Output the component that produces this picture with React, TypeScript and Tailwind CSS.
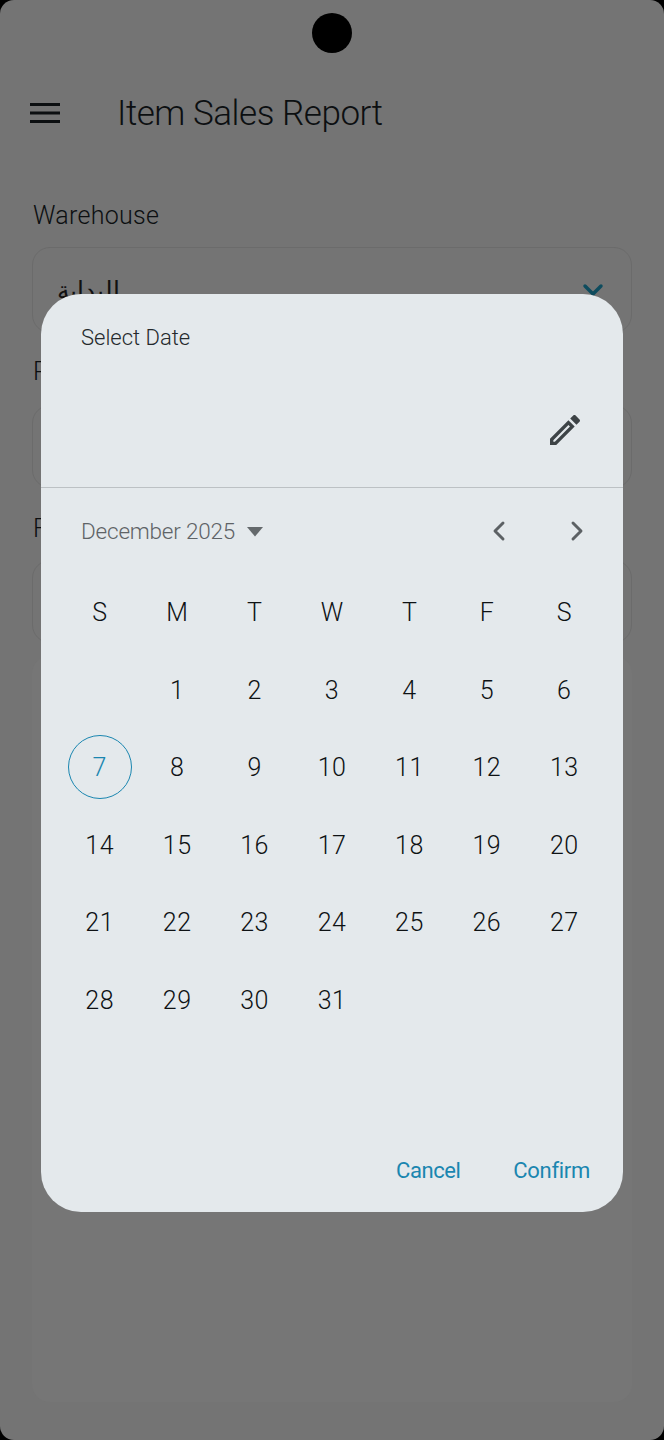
import React from "react"
import { ChevronDown, ChevronLeft, ChevronRight } from "lucide-react"

const font = "font-['Roboto','Noto_Sans',sans-serif]"

const weekDays = ["S", "M", "T", "W", "T", "F", "S"]
const days = [null, ...Array.from({ length: 31 }, (_, i) => i + 1)]

function Field({ label, value, height, top, gap }: { label: string; value?: string; height: string; top: string; gap: string }) {
  return (
    <div className={`flex flex-col ${top}`}>
      <span className="pl-[1px] text-[25px] leading-[32px] text-[#0c0f11] tracking-[0.3px] font-light">{label}</span>
      <div className={`${gap} ${height} rounded-[18px] border border-[#6b6b6b] flex items-center justify-between pl-[24px] pr-[22px]`}>
        {value && <span className="text-[25px] text-[#111] font-['Noto_Sans',sans-serif]">{value}</span>}
        {value && <ChevronDown className="w-[32px] h-[32px] text-[#0e4c5e]" strokeWidth={2.6} />}
      </div>
    </div>
  )
}

export default function App() {
  return (
    <div className={`relative w-[664px] h-[1440px] overflow-hidden bg-black ${font}`}>
      <div className="relative h-full rounded-[14px] bg-[#747474] overflow-hidden">
        <div className="absolute left-[312px] top-[13px] w-[40px] h-[40px] rounded-full bg-black" />

        <header className="flex items-center pt-[88px] pl-[30px] h-[138px]">
          <svg width="30" height="20" viewBox="0 0 30 20" className="text-[#0c0f11]" fill="currentColor">
            <rect x="0" y="0" width="30" height="3" />
            <rect x="0" y="8.5" width="30" height="3" />
            <rect x="0" y="17" width="30" height="3" />
          </svg>
          <h1 className="ml-[57px] mt-[2px] text-[35px] leading-[44px] font-light text-[#0c0f11] tracking-[-0.45px]">Item Sales Report</h1>
        </header>

        <main className="px-[32px] pt-[62px] flex flex-col">
          <Field label="Warehouse" value="البداية" height="h-[86px]" top="" gap="mt-[15px]" />
          <Field label="P" height="h-[83px]" top="mt-[23px]" gap="mt-[17px]" />
          <Field label="F" height="h-[83px]" top="mt-[25px]" gap="mt-[15px]" />
          <div className="h-[746px] mt-[13px] rounded-[18px] bg-[#767676]" />
        </main>

        <div className="absolute left-[41px] top-[294px] w-[582px] h-[918px] rounded-[40px] bg-[#e4e9ec] flex flex-col">
          <div className="h-[194px] border-b border-[#bcc1c4] pl-[40px] pr-[38px] pt-[29px] flex flex-col">
            <span className="text-[22px] leading-[30px] font-light text-[#24292c]">Select Date</span>
            <svg className="self-end mt-[57px] w-[40px] h-[40px]" viewBox="0 0 24 24" fill="#3d4346">
              <path d="M3 17.25V21h3.75L17.81 9.94l-3.75-3.75L3 17.25zM5.92 19H5v-.92l9.06-9.06.92.92L5.92 19zM20.71 5.63l-2.34-2.34c-.2-.2-.45-.29-.71-.29s-.51.1-.7.29l-1.83 1.83 3.75 3.75 1.83-1.83c.39-.39.39-1.02 0-1.41z" />
            </svg>
          </div>

          <div className="flex items-center h-[87px] pl-[40px] pr-[30px]">
            <span className="text-[22.5px] tracking-[-0.2px] font-light text-[#5e6366]">December 2025</span>
            <svg width="16" height="10" viewBox="0 0 16 10" className="ml-[12px]" fill="#64696c">
              <path d="M0 0h16L8 9.5z" />
            </svg>
            <div className="ml-auto mb-[2px] flex items-center gap-[46px]">
              <ChevronLeft className="w-[32px] h-[32px] text-[#5c6164]" strokeWidth={2.2} />
              <ChevronRight className="w-[32px] h-[32px] text-[#5c6164]" strokeWidth={2.2} />
            </div>
          </div>

          <div className="grid grid-cols-7 w-[542px] mx-auto mt-[-1px]">
            {weekDays.map((d, i) => (
              <div key={i} className="h-[77.5px] flex items-center justify-center text-[25px] font-light text-[#0e1214]">{d}</div>
            ))}
            {days.map((d, i) => (
              <div key={i} className="h-[77.5px] flex items-center justify-center text-[25px] font-light tracking-[0.5px] text-[#0e1214]">
                {d === 7 ? (
                  <span className="w-[64px] h-[64px] mb-[2px] rounded-full border-[1.5px] border-[#1a86b0] flex items-center justify-center text-[#1a86b0]">
                    <span className="mt-[2px]">7</span>
                  </span>
                ) : d}
              </div>
            ))}
          </div>

          <div className="mt-auto flex items-center justify-end gap-[53px] pr-[33px] pb-[25px]">
            <span className="text-[22px] text-[#1a86b0] tracking-[-0.45px]">Cancel</span>
            <span className="text-[22px] text-[#1a86b0] tracking-[-0.3px]">Confirm</span>
          </div>
        </div>
      </div>
    </div>
  )
}
